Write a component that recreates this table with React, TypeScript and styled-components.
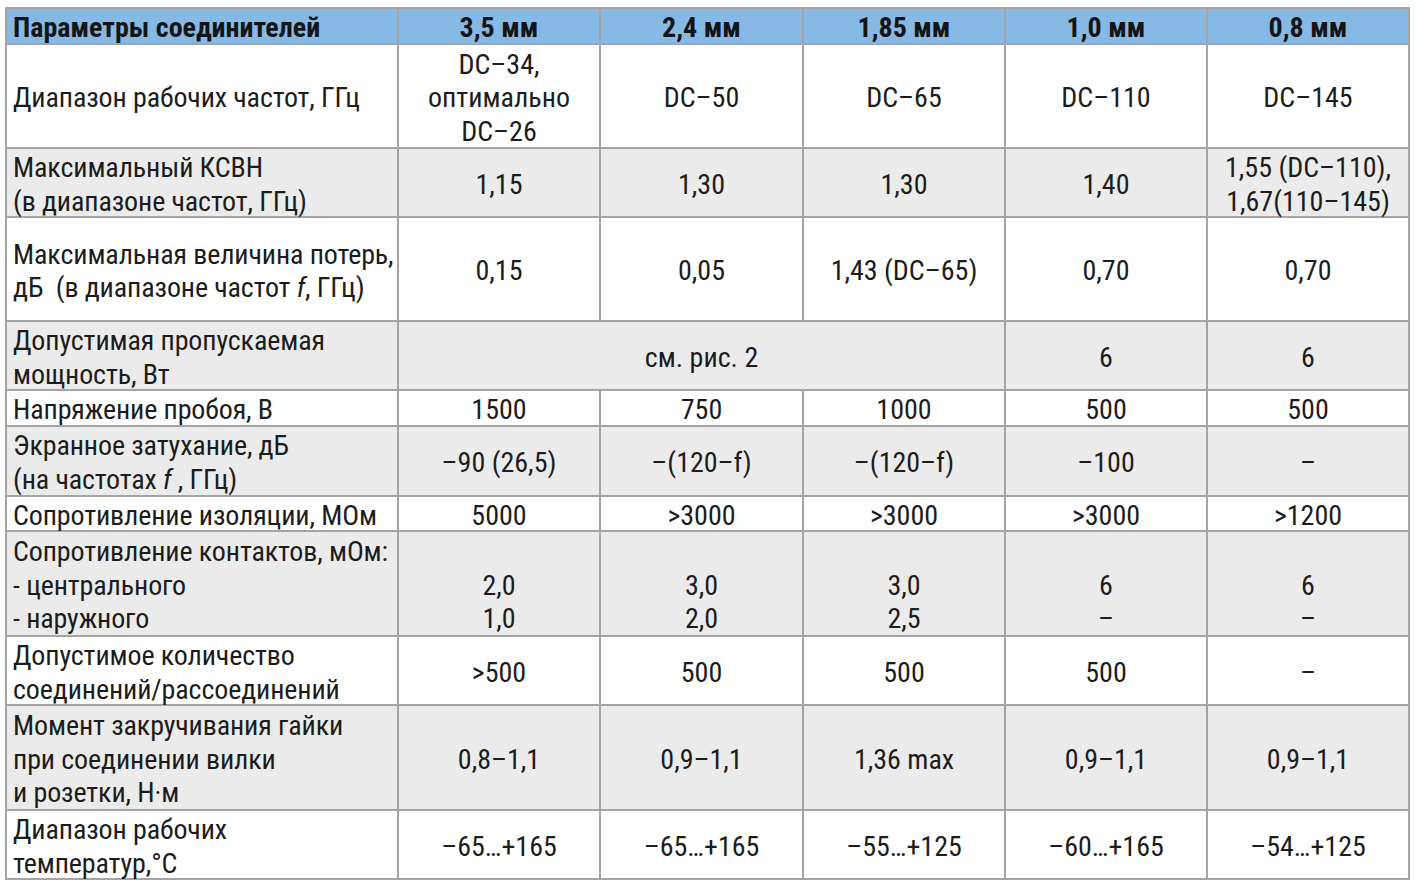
import React from "react";
import styled, { createGlobalStyle } from "styled-components";

const Global = createGlobalStyle`
  html, body { margin: 0; padding: 0; background: #ffffff; }
  body { padding: 7px 0 0 5px; }
`;

const FONT = `"Liberation Sans Narrow", "Roboto Condensed", "DejaVu Sans Condensed", "Roboto", sans-serif`;

const Table = styled.table`
  border-collapse: collapse;
  table-layout: fixed;
  width: 1405px;
  font-family: ${FONT};
  font-size: 28px;
  color: #1c1c1c;
  border: 2px solid #a4a4a4;
`;

const Col = styled.col<{ $w: number }>`
  width: ${(p) => p.$w}px;
`;

const Row = styled.tr<{ $h: number; $bg: string }>`
  height: ${(p) => p.$h}px;
  background: ${(p) => p.$bg};
`;

const HeadCell = styled.th<{ $left?: boolean }>`
  border: 2px solid #a4a4a4;
  padding: 0 6px;
  font-weight: 700;
  font-size: 28px;
  line-height: 32px;
  text-align: ${(p) => (p.$left ? "left" : "center")};
  vertical-align: middle;
  color: #151515;
  white-space: nowrap;
`;

const LabelCell = styled.td`
  border: 2px solid #a4a4a4;
  padding: 0 6px;
  text-align: left;
  vertical-align: middle;
  line-height: 33.5px;
  letter-spacing: -0.12px;
  white-space: nowrap;
`;

const ValueCell = styled.td`
  border: 2px solid #a4a4a4;
  padding: 0 4px;
  text-align: center;
  vertical-align: middle;
  line-height: 33.5px;
  white-space: nowrap;
`;

/* shifts the text block 2px lower without changing the height it takes */
const Stack = styled.div`
  margin: 2px 0 -2px;
`;

const Line = styled.div``;

const Em = styled.i`
  font-style: italic;
`;

const WHITE = "#ffffff";
const GRAY = "#ebebeb";
const BLUE = "#86b9e5";

type Cell = { lines: React.ReactNode[]; span?: number };
type RowData = { h: number; bg: string; label: React.ReactNode[]; cells: Cell[] };

const one = (s: string): Cell => ({ lines: [s] });

const rows: RowData[] = [
  {
    h: 104,
    bg: WHITE,
    label: ["Диапазон рабочих частот, ГГц"],
    cells: [
      { lines: ["DC–34,", "оптимально", "DC–26"] },
      one("DC–50"),
      one("DC–65"),
      one("DC–110"),
      one("DC–145"),
    ],
  },
  {
    h: 69,
    bg: GRAY,
    label: ["Максимальный КСВН", "(в диапазоне частот, ГГц)"],
    cells: [one("1,15"), one("1,30"), one("1,30"), one("1,40"), { lines: ["1,55 (DC–110),", "1,67(110–145)"] }],
  },
  {
    h: 104,
    bg: WHITE,
    label: [
      "Максимальная величина потерь,",
      <>
        дБ&nbsp; (в диапазоне частот <Em>f</Em>, ГГц)
      </>,
    ],
    cells: [one("0,15"), one("0,05"), one("1,43 (DC–65)"), one("0,70"), one("0,70")],
  },
  {
    h: 69,
    bg: GRAY,
    label: ["Допустимая пропускаемая", "мощность, Вт"],
    cells: [{ lines: ["см. рис. 2"], span: 3 }, one("6"), one("6")],
  },
  {
    h: 35,
    bg: WHITE,
    label: ["Напряжение пробоя, В"],
    cells: [one("1500"), one("750"), one("1000"), one("500"), one("500")],
  },
  {
    h: 70,
    bg: GRAY,
    label: [
      "Экранное затухание, дБ",
      <>
        (на частотах <Em>f</Em> , ГГц)
      </>,
    ],
    cells: [one("–90 (26,5)"), one("–(120–f)"), one("–(120–f)"), one("–100"), one("–")],
  },
  {
    h: 35,
    bg: WHITE,
    label: ["Сопротивление изоляции, МОм"],
    cells: [one("5000"), one(">3000"), one(">3000"), one(">3000"), one(">1200")],
  },
  {
    h: 105,
    bg: GRAY,
    label: ["Сопротивление контактов, мОм:", "- центрального", "- наружного"],
    cells: [
      { lines: ["\u00a0", "2,0", "1,0"] },
      { lines: ["\u00a0", "3,0", "2,0"] },
      { lines: ["\u00a0", "3,0", "2,5"] },
      { lines: ["\u00a0", "6", "–"] },
      { lines: ["\u00a0", "6", "–"] },
    ],
  },
  {
    h: 68,
    bg: WHITE,
    label: ["Допустимое количество", "соединений/рассоединений"],
    cells: [one(">500"), one("500"), one("500"), one("500"), one("–")],
  },
  {
    h: 105,
    bg: GRAY,
    label: ["Момент закручивания гайки", "при соединении вилки", "и розетки, Н·м"],
    cells: [one("0,8–1,1"), one("0,9–1,1"), one("1,36 max"), one("0,9–1,1"), one("0,9–1,1")],
  },
  {
    h: 69,
    bg: WHITE,
    label: ["Диапазон рабочих", "температур,°С"],
    cells: [one("–65…+165"), one("–65…+165"), one("–55…+125"), one("–60…+165"), one("–54…+125")],
  },
];

const heads = ["3,5 мм", "2,4 мм", "1,85 мм", "1,0 мм", "0,8 мм"];
const widths = [392, 202, 203, 202, 202, 202];

export default function App() {
  return (
    <>
      <Global />
      <Table>
        <colgroup>
          {widths.map((w, i) => (
            <Col key={i} $w={w} />
          ))}
        </colgroup>
        <thead>
          <Row $h={36} $bg={BLUE}>
            <HeadCell $left>
              <Stack>Параметры соединителей</Stack>
            </HeadCell>
            {heads.map((h) => (
              <HeadCell key={h}>
                <Stack>{h}</Stack>
              </HeadCell>
            ))}
          </Row>
        </thead>
        <tbody>
          {rows.map((r, i) => (
            <Row key={i} $h={r.h} $bg={r.bg}>
              <LabelCell>
                <Stack>
                  {r.label.map((l, j) => (
                    <Line key={j}>{l}</Line>
                  ))}
                </Stack>
              </LabelCell>
              {r.cells.map((c, j) => (
                <ValueCell key={j} colSpan={c.span}>
                  <Stack>
                    {c.lines.map((l, k) => (
                      <Line key={k}>{l}</Line>
                    ))}
                  </Stack>
                </ValueCell>
              ))}
            </Row>
          ))}
        </tbody>
      </Table>
    </>
  );
}
